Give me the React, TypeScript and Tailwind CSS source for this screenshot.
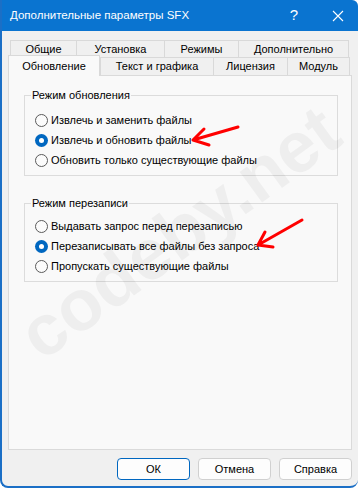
import { ReactNode } from "react";

const FONT = "font-['Liberation_Sans',sans-serif]";

function Radio({ label, checked }: { label: string; checked?: boolean }) {
    return (
        <div className="flex h-[20px] items-center">
            {checked ? (
                <span className="flex h-[13px] w-[13px] shrink-0 items-center justify-center rounded-full bg-[#0067c0]">
                    <span className="h-[5px] w-[5px] rounded-full bg-white" />
                </span>
            ) : (
                <span className="h-[13px] w-[13px] shrink-0 rounded-full border border-[#5a5a5a] bg-[#fbfbfb]" />
            )}
            <span className="ml-[3px] text-[11px] leading-none text-black">
                {label}
            </span>
        </div>
    );
}

function Group({
    title,
    children,
    className,
}: {
    title: string;
    children: ReactNode;
    className: string;
}) {
    return (
        <fieldset
            className={`w-[314px] border border-[#dcdcdc] pb-[5px] ${className}`}
        >
            <legend className="ml-[6px] px-[1px] text-[11px] leading-[14px] text-black">
                {title}
            </legend>
            {children}
        </fieldset>
    );
}

function Tab({ label, w }: { label: string; w: string }) {
    return (
        <div
            className={`flex h-full items-center justify-center border border-b-0 border-[#d9d9d9] bg-[#f0f0f0] text-[11px] text-black -ml-px first:ml-0 ${w}`}
        >
            {label}
        </div>
    );
}

export default function App() {
    return (
        <div className={`relative h-[488px] w-[360px] overflow-hidden bg-white ${FONT}`}>

            {/* Window */}

            <div className="flex h-[488px] w-[358px] flex-col overflow-hidden rounded-b-[8px] rounded-tr-[6px] border-b-2 border-l-2 border-[#1b6fc6] bg-[#f0f0f0]">

                {/* Title bar */}

                <div className="-ml-[2px] flex h-[31px] shrink-0 items-center bg-[#0a74d0] pl-[10px] text-white">
                    <span className="text-[11.5px]">
                        Дополнительные параметры SFX
                    </span>
                    <span className="ml-auto text-[15px] font-light">?</span>
                    <svg
                        width="12"
                        height="12"
                        viewBox="0 0 12 12"
                        className="ml-[34px] mr-[14px]"
                    >
                        <path
                            d="M1 1 L11 11 M11 1 L1 11"
                            stroke="white"
                            strokeWidth="1.1"
                        />
                    </svg>
                </div>

                <div className="flex flex-col pl-[6px] pr-[6px] pt-[9px]">

                    {/* Tabs */}

                    <div className="flex h-[17px] pl-[2px]">
                        <Tab label="Общие" w="w-[67px]" />
                        <Tab label="Установка" w="w-[89px]" />
                        <Tab label="Режимы" w="w-[75px]" />
                        <Tab label="Дополнительно" w="w-[111px]" />
                    </div>

                    <div className="flex h-[18px] items-end">
                        <div className="relative z-10 -mb-px flex h-[21px] w-[92px] items-center justify-center border border-b-0 border-[#d9d9d9] bg-[#f9f9f9] pt-[1px] text-[11px] text-black">
                            Обновление
                        </div>
                        <div className="flex h-full">
                            <Tab label="Текст и графика" w="w-[114px]" />
                            <Tab label="Лицензия" w="w-[75px]" />
                            <Tab label="Модуль" w="w-[63px]" />
                        </div>
                    </div>

                    {/* Panel */}

                    <div className="h-[375px] w-[344px] border border-[#dadada] bg-[#f9f9f9] pl-[15px] pt-[12px]">

                        <Group title="Режим обновления" className="">
                            <div className="pl-[10px] pt-[8px]">
                                <Radio label="Извлечь и заменить файлы" />
                                <Radio label="Извлечь и обновить файлы" checked />
                                <Radio label="Обновить только существующие файлы" />
                            </div>
                        </Group>

                        <Group title="Режим перезаписи" className="mt-[20px]">
                            <div className="pl-[10px] pt-[6px]">
                                <Radio label="Выдавать запрос перед перезаписью" />
                                <Radio label="Перезаписывать все файлы без запроса" checked />
                                <Radio label="Пропускать существующие файлы" />
                            </div>
                        </Group>

                    </div>

                    {/* Buttons */}

                    <div className="mt-[8px] flex justify-end gap-[8px]">
                        <button className="h-[22px] w-[73px] rounded-[4px] border border-[#0067c0] bg-[#fdfdfd] text-[11px] text-black">
                            ОК
                        </button>
                        <button className="h-[22px] w-[73px] rounded-[4px] border border-[#d0d0d0] bg-[#fdfdfd] text-[11px] text-black">
                            Отмена
                        </button>
                        <button className="h-[22px] w-[73px] rounded-[4px] border border-[#d0d0d0] bg-[#fdfdfd] text-[11px] text-black">
                            Справка
                        </button>
                    </div>

                </div>

            </div>

            {/* Watermark */}

            <div className="pointer-events-none absolute left-[179px] top-[232px] -translate-x-1/2 -translate-y-1/2 -rotate-[36deg] whitespace-nowrap text-[72px] font-bold leading-none text-black/[0.045]">
                codeby.net
            </div>

            {/* Red arrows */}

            <svg
                width="360"
                height="488"
                className="pointer-events-none absolute left-0 top-0"
            >
                <g
                    stroke="#ff0000"
                    strokeWidth="3"
                    strokeLinecap="round"
                    fill="none"
                >
                    <path d="M238 127 L193 140 M193 140 L204 129 M193 140 L209 145" />
                    <path d="M302 220 L258 245 M258 245 L265 232 M258 245 L273 247" />
                </g>
            </svg>

        </div>
    );
}
